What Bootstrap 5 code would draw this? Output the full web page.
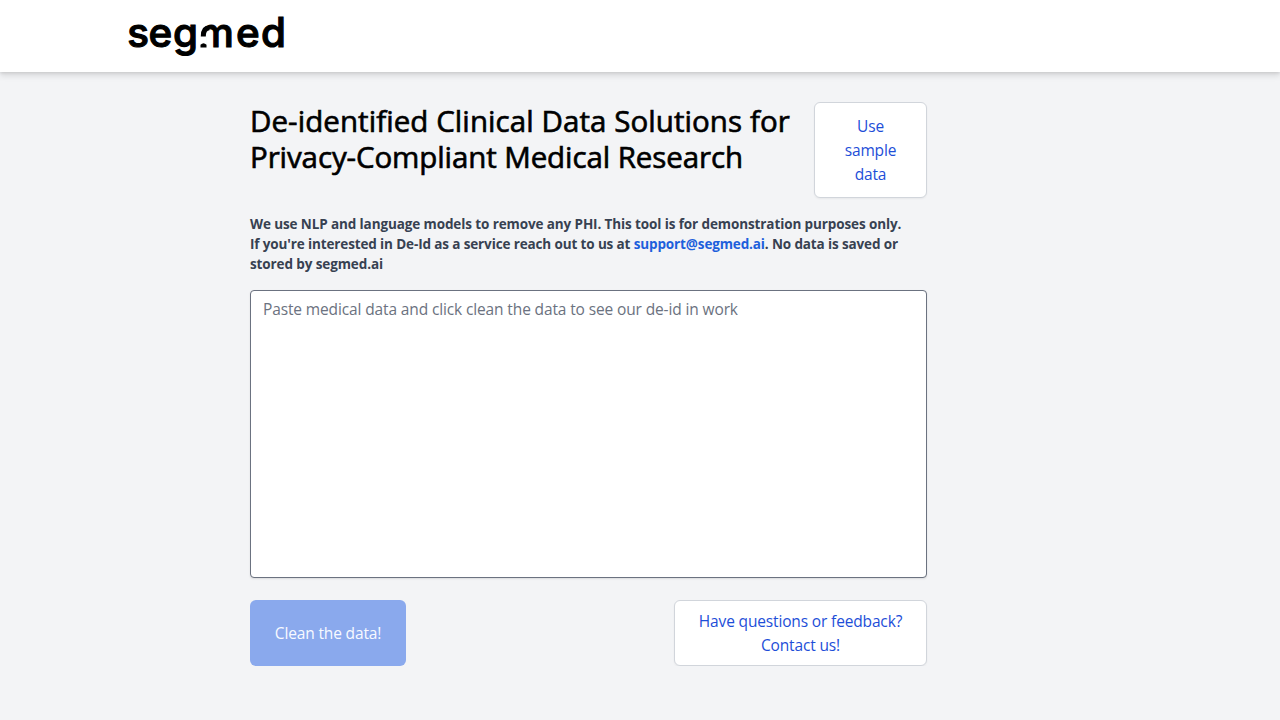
<!DOCTYPE html>
<html lang="en">
<head>
<meta charset="utf-8">
<meta name="viewport" content="width=device-width, initial-scale=1">
<title>Segmed De-Id</title>
<link href="https://cdn.jsdelivr.net/npm/bootstrap@5.3.0/dist/css/bootstrap.min.css" rel="stylesheet">
<style>
  body { background: #f3f4f6; font-family: "Open Sans", "Noto Sans", sans-serif; overflow: hidden; }
  .site-header { height: 72px; padding-left: 128px; box-shadow: 0 1px 3px rgba(0,0,0,.1), 0 4px 6px rgba(0,0,0,.1); }
  .brand-logo { display: block; overflow: visible; }
  .tool { width: 677px; margin: 30px 0 0 250px; }
  .tool-title { font-size: 29.5px; line-height: 36px; font-weight: 400; -webkit-text-stroke: .65px #000; color: #000; margin: 1px 0 0; letter-spacing: .07px; white-space: nowrap; }
  .title-end { letter-spacing: -.1px; }
  .intro { font-size: 13.5px; line-height: 20px; font-weight: 700; color: #374151; margin: 16px 0; letter-spacing: -.11px; white-space: nowrap; }
  .intro-contact { letter-spacing: -.13px; }
  .intro a { color: #1d5fdc; }
  .btn-tool { font-size: 15.5px; line-height: 24px; letter-spacing: -.15px; border-radius: 6px; }
  .btn-plain, .btn-plain:hover { background: #fff; color: #1d4ed8; border: 1px solid #d1d5db; box-shadow: 0 1px 2px rgba(0,0,0,.05); }
  .btn-sample { width: 113px; height: 96px; }
  .btn-clean, .btn-clean:disabled { width: 156px; height: 66px; background: #8aa9ed; color: #f8faff; border: 0; opacity: 1; }
  .btn-contact { width: 253px; height: 66px; }
  .notes { height: 288px; padding: 6px 12px; font-size: 15.5px; line-height: 24px; letter-spacing: -.13px; border: 1px solid #6b7280; border-radius: 4px; resize: none; box-shadow: 0 1px 2px rgba(0,0,0,.1); }
  .notes::placeholder { color: #6b7280; }
  .actions { margin-top: 22px; }
</style>
</head>
<body>
<header class="site-header bg-white">
  <a href="#" class="d-inline-block">
    <svg class="brand-logo" width="160" height="72" viewBox="128 0 160 72" role="img" aria-label="segmed">
      <text y="47.4" font-family="Inter, sans-serif" font-size="40.4" font-weight="500" fill="#000" stroke="#000" stroke-width="1.1"><tspan x="127.3">s</tspan><tspan x="148.5">e</tspan><tspan x="173">g</tspan><tspan x="198">m</tspan><tspan x="236">e</tspan><tspan x="261">d</tspan></text>
      <!-- the m has its first stem cut down to a hook and a small foot -->
      <path d="M198.3 23H206.8V49H198.3Z" fill="#fff"/>
      <path d="M203.3 36.5C203.3 30.5 205.5 27.8 209.5 27.8" fill="none" stroke="#000" stroke-width="5"/>
      <path d="M200.5 47.5V44.8Q203.5 41.5 206.5 44.8V47.5Z"/>
    </svg>
  </a>
</header>
<main class="tool">
  <div class="d-flex justify-content-between align-items-start">
    <h1 class="tool-title">De-identified Clinical Data Solutions for<br><span class="title-end">Privacy-Compliant Medical Research</span></h1>
    <button type="button" class="btn btn-tool btn-plain btn-sample flex-shrink-0 p-0">Use<br>sample<br>data</button>
  </div>
  <p class="intro">We use NLP and language models to remove any PHI. This tool is for demonstration purposes only.<br><span class="intro-contact">If you're interested in De-Id as a service reach out to us at <a href="mailto:support@segmed.ai" class="text-decoration-none">support@segmed.ai</a>. No data is saved or</span><br>stored by segmed.ai</p>
  <textarea class="form-control notes" placeholder="Paste medical data and click clean the data to see our de-id in work"></textarea>
  <div class="actions d-flex justify-content-between">
    <button type="button" class="btn btn-tool btn-clean p-0" disabled>Clean the data!</button>
    <button type="button" class="btn btn-tool btn-plain btn-contact p-0">Have questions or feedback?<br>Contact us!</button>
  </div>
</main>
<script src="https://cdn.jsdelivr.net/npm/bootstrap@5.3.0/dist/js/bootstrap.bundle.min.js"></script>
</body>
</html>
